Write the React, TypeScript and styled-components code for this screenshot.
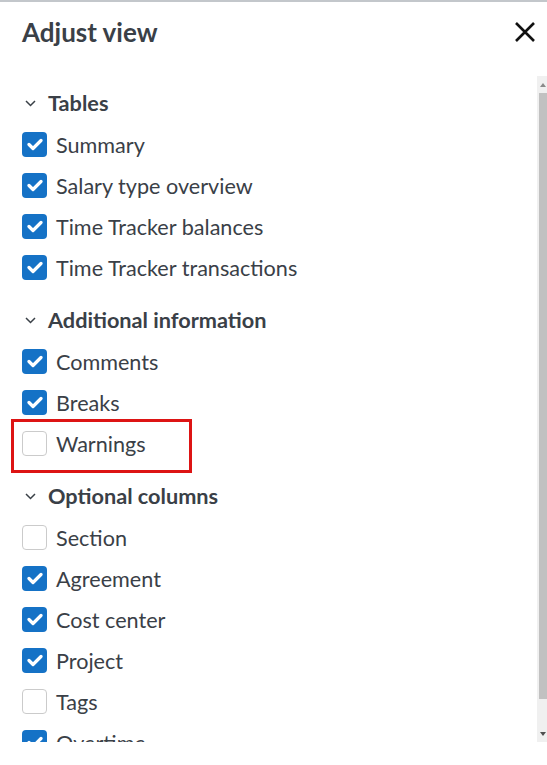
import React from "react";
import styled, { createGlobalStyle } from "styled-components";

const GlobalStyle = createGlobalStyle`
  html, body {
    margin: 0;
    padding: 0;
    background: #ffffff;
  }
  body {
    font-family: Lato, "Noto Sans", sans-serif;
    color: #3a4047;
  }
`;

const Panel = styled.aside`
  width: 547px;
  height: 765px;
  box-sizing: border-box;
  border-top: 2px solid #c3c7cb;
  background: #fff;
  display: flex;
  flex-direction: column;
  overflow: hidden;
`;

const Header = styled.header`
  display: flex;
  align-items: center;
  justify-content: space-between;
  height: 60px;
  padding: 0 12px 0 22px;
`;

const Title = styled.h1`
  margin: 0;
  font-size: 26px;
  font-weight: 700;
  color: #3a4047;
`;

const CloseButton = styled.button`
  display: flex;
  align-items: center;
  justify-content: center;
  width: 20px;
  height: 20px;
  padding: 0;
  border: none;
  background: none;
  cursor: pointer;
`;

const ScrollFrame = styled.div`
  margin-top: 14px;
  height: 666px;
  display: flex;
`;

const ScrollArea = styled.div`
  flex: 1;
  overflow: hidden;
`;

const Content = styled.div`
  padding: 10px 0 14px;
`;

/* scrollbar rail, drawn since the headless browser hides native ones */
const Rail = styled.div`
  width: 10px;
  display: flex;
  flex-direction: column;
  background: #f0f0f0;
`;

const RailButton = styled.div<{ $dir: "up" | "down" }>`
  height: 17px;
  display: flex;
  align-items: center;
  justify-content: center;
  padding-left: 2px;
  &::before {
    content: "";
    border-left: 3px solid transparent;
    border-right: 3px solid transparent;
    ${(p) =>
      p.$dir === "up"
        ? "border-bottom: 4px solid #8a8a8a;"
        : "border-top: 4px solid #505050;"}
  }
`;

const Thumb = styled.div`
  height: 606px;
  margin-left: 2px;
  background: #c1c1c1;
`;

const Track = styled.div`
  flex: 1;
`;

const Section = styled.section`
  & + & {
    margin-top: 15px;
  }
`;

const SectionHeader = styled.div`
  display: flex;
  align-items: center;
  gap: 12px;
  height: 34px;
  margin-bottom: 4px;
  padding-left: 25px;
  font-size: 21.7px;
  font-weight: 700;
`;

const Row = styled.label`
  position: relative;
  display: flex;
  align-items: center;
  gap: 9px;
  height: 41px;
  padding-left: 22px;
  font-size: 21.6px;
`;

const Box = styled.span<{ $checked: boolean }>`
  display: flex;
  align-items: center;
  justify-content: center;
  box-sizing: border-box;
  width: 25px;
  height: 25px;
  border-radius: 4px;
  background: ${(p) => (p.$checked ? "#1572c6" : "#fff")};
  border: ${(p) => (p.$checked ? "none" : "1.5px solid #cbcbcb")};
`;

const Highlight = styled.span`
  position: absolute;
  left: 11px;
  top: -4px;
  width: 181px;
  height: 54px;
  box-sizing: border-box;
  border: 3px solid #dd1414;
  pointer-events: none;
`;

type Item = { label: string; checked: boolean; marked?: boolean };

const sections: { title: string; items: Item[] }[] = [
  {
    title: "Tables",
    items: [
      { label: "Summary", checked: true },
      { label: "Salary type overview", checked: true },
      { label: "Time Tracker balances", checked: true },
      { label: "Time Tracker transactions", checked: true },
    ],
  },
  {
    title: "Additional information",
    items: [
      { label: "Comments", checked: true },
      { label: "Breaks", checked: true },
      { label: "Warnings", checked: false, marked: true },
    ],
  },
  {
    title: "Optional columns",
    items: [
      { label: "Section", checked: false },
      { label: "Agreement", checked: true },
      { label: "Cost center", checked: true },
      { label: "Project", checked: true },
      { label: "Tags", checked: false },
      { label: "Overtime", checked: true },
    ],
  },
];

const Chevron = () => (
  <svg width="11" height="7" viewBox="0 0 11 7" fill="none">
    <path d="M1 1l4.5 4.5L10 1" stroke="#3a4047" strokeWidth="1.5" />
  </svg>
);

const Check = () => (
  <svg width="16" height="13" viewBox="0 0 16 13" fill="none">
    <path
      d="M2 6.5l4 4L14 2.5"
      stroke="#fff"
      strokeWidth="3.2"
      strokeLinecap="round"
      strokeLinejoin="round"
    />
  </svg>
);

const CloseIcon = () => (
  <svg width="20" height="20" viewBox="0 0 20 20" fill="none">
    <path d="M1 1l18 18M19 1L1 19" stroke="#111" strokeWidth="2.6" />
  </svg>
);

export default function App() {
  return (
    <>
      <GlobalStyle />
      <Panel>
        <Header>
          <Title>Adjust view</Title>
          <CloseButton aria-label="Close">
            <CloseIcon />
          </CloseButton>
        </Header>
        <ScrollFrame>
          <ScrollArea>
            <Content>
              {sections.map((s) => (
                <Section key={s.title}>
                  <SectionHeader>
                    <Chevron />
                    {s.title}
                  </SectionHeader>
                  {s.items.map((it) => (
                    <Row key={it.label}>
                      <Box $checked={it.checked}>
                        {it.checked && <Check />}
                      </Box>
                      {it.label}
                      {it.marked && <Highlight />}
                    </Row>
                  ))}
                </Section>
              ))}
            </Content>
          </ScrollArea>
          <Rail>
            <RailButton $dir="up" />
            <Thumb />
            <Track />
            <RailButton $dir="down" />
          </Rail>
        </ScrollFrame>
      </Panel>
    </>
  );
}
